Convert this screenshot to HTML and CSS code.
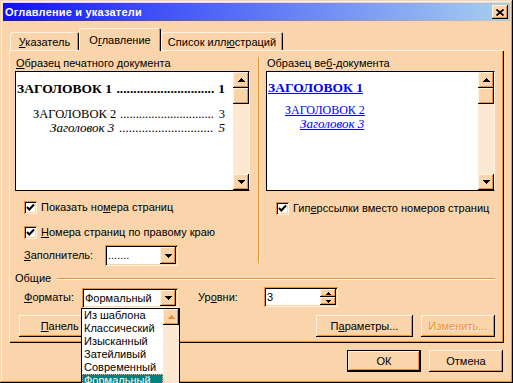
FILE: index.html
```html
<!DOCTYPE html>
<html lang="ru">
<head>
<meta charset="utf-8">
<title>Оглавление и указатели</title>
<link rel="stylesheet" href="styles.css">
</head>
<body>
<div class="window">
  <div class="titlebar">
    <span class="title">Оглавление и указатели</span>
    <span class="close"><svg width="8" height="7" viewBox="0 0 8 7"><path d="M0.5 0.5L7.5 6.5M7.5 0.5L0.5 6.5" stroke="#000" stroke-width="1.7"/></svg></span>
  </div>
  <div class="body">
    <div class="tabs">
      <div class="tab t1"><u>У</u>казатель</div>
      <div class="tab t2 active">О<u>г</u>лавление</div>
      <div class="tab t3">Список илл<u>ю</u>страций</div>
    </div>
    <div class="panel">
      <div class="columns">
        <div class="col col-left">
          <div class="label"><u>О</u>бразец печатного документа</div>
          <div class="preview preview-left">
            <div class="page print">
              <div class="toc h1"><span class="t">ЗАГОЛОВОК 1</span><span class="dots">.............................</span><span class="n">1</span></div>
              <div class="toc h2"><span class="t">ЗАГОЛОВОК 2</span><span class="dots">..............................</span><span class="n">3</span></div>
              <div class="toc h3"><span class="t">Заголовок 3</span><span class="dots">.............................</span><span class="n">5</span></div>
            </div>
            <div class="vscroll">
              <span class="sbtn"><svg width="7" height="4" viewBox="0 0 7 4"><path d="M3 0h1v1h1v1h1v1h1v1h-7v-1h1v-1h1v-1h1z"/></svg></span>
              <span class="thumb"></span>
              <span class="track"></span>
              <span class="sbtn"><svg width="7" height="4" viewBox="0 0 7 4"><path d="M0 0h7v1h-1v1h-1v1h-1v1h-1v-1h-1v-1h-1v-1h-1z"/></svg></span>
            </div>
          </div>
          <div class="check-row first">
            <span class="checkbox"><svg width="9" height="9" viewBox="0 0 9 9"><path d="M1 4l2.3 2.5L8 1.5" fill="none" stroke="#000" stroke-width="2"/></svg></span>
            <span>Показать но<u>м</u>ера страниц</span>
          </div>
          <div class="check-row second">
            <span class="checkbox"><svg width="9" height="9" viewBox="0 0 9 9"><path d="M1 4l2.3 2.5L8 1.5" fill="none" stroke="#000" stroke-width="2"/></svg></span>
            <span><u>Н</u>омера страниц по правому краю</span>
          </div>
          <div class="fill-row">
            <span class="fill-label"><u>З</u>аполнитель:</span>
            <div class="combo combo-fill">
              <span class="val">.......</span>
              <span class="ddbtn"><svg width="7" height="4" viewBox="0 0 7 4"><path d="M0 0h7v1h-1v1h-1v1h-1v1h-1v-1h-1v-1h-1v-1h-1z"/></svg></span>
            </div>
          </div>
        </div>
        <div class="col col-right">
          <div class="label">Образец ве<u>б</u>-документа</div>
          <div class="preview preview-right">
            <div class="page web">
              <div class="w1"><a>ЗАГОЛОВОК 1</a></div>
              <div class="w2"><a>ЗАГОЛОВОК 2</a></div>
              <div class="w3"><a>Заголовок 3</a></div>
            </div>
            <div class="vscroll">
              <span class="sbtn"><svg width="7" height="4" viewBox="0 0 7 4"><path d="M3 0h1v1h1v1h1v1h1v1h-7v-1h1v-1h1v-1h1z"/></svg></span>
              <span class="thumb"></span>
              <span class="track"></span>
              <span class="sbtn"><svg width="7" height="4" viewBox="0 0 7 4"><path d="M0 0h7v1h-1v1h-1v1h-1v1h-1v-1h-1v-1h-1v-1h-1z"/></svg></span>
            </div>
          </div>
          <div class="check-row web-check">
            <span class="checkbox"><svg width="9" height="9" viewBox="0 0 9 9"><path d="M1 4l2.3 2.5L8 1.5" fill="none" stroke="#000" stroke-width="2"/></svg></span>
            <span>Гип<u>е</u>рссылки вместо номеров страниц</span>
          </div>
        </div>
      </div>
      <div class="group-head">
        <span>Общие</span>
        <span class="etch"></span>
      </div>
      <div class="formats-row">
        <span class="fmt-label"><u>Ф</u>орматы:</span>
        <div class="combo combo-fmt">
          <span class="val">Формальный</span>
          <span class="ddbtn"><svg width="7" height="4" viewBox="0 0 7 4"><path d="M0 0h7v1h-1v1h-1v1h-1v1h-1v-1h-1v-1h-1v-1h-1z"/></svg></span>
          <div class="dropdown">
            <div class="items">
              <div class="item">Из шаблона</div>
              <div class="item">Классический</div>
              <div class="item">Изысканный</div>
              <div class="item">Затейливый</div>
              <div class="item">Современный</div>
              <div class="item selected">Формальный</div>
            </div>
            <div class="vscroll list-scroll">
              <span class="sbtn disabled"><svg width="7" height="4" viewBox="0 0 7 4"><path d="M3 0h1v1h1v1h1v1h1v1h-7v-1h1v-1h1v-1h1z"/></svg></span>
              <span class="track"></span>
            </div>
          </div>
        </div>
        <span class="lvl-label">Ур<u>о</u>вни:</span>
        <div class="spin">
          <span class="val">3</span>
          <span class="spin-btns">
            <span class="spbtn"><svg width="5" height="3" viewBox="0 0 5 3"><path d="M2 0h1v1h1v1h1v1h-5v-1h1v-1h1z"/></svg></span>
            <span class="spbtn"><svg width="5" height="3" viewBox="0 0 5 3"><path d="M0 0h5v1h-1v1h-1v1h-1v-1h-1v-1h-1z"/></svg></span>
          </span>
        </div>
      </div>
      <div class="buttons-row">
        <span class="btn btn-panel"><u>П</u>анель структуры</span>
        <span class="btn btn-params">П<u>а</u>раметры...</span>
        <span class="btn btn-edit disabled">Изменить...</span>
      </div>
    </div>
    <div class="dialog-buttons">
      <span class="btn default">ОК</span>
      <span class="btn">Отмена</span>
    </div>
  </div>
</div>
</body>
</html>
```

FILE: styles.css
```css
* { box-sizing: border-box; }

body {
  margin: 0;
  font: 11px/13px "Liberation Sans", Arial, sans-serif;
  color: #000;
  background: #FAD4AA;
}

u { text-decoration: underline; }

.window {
  width: 513px;
  height: 383px;
  padding: 3px;
  background: #FAD4AA;
  position: relative;
  overflow: hidden;
  box-shadow: inset -1px -1px #000, inset 1px 1px #FAD4AA, inset -2px -2px #F0902C, inset 2px 2px #FFF3E4;
}

.titlebar {
  height: 18px;
  display: flex;
  align-items: center;
  justify-content: space-between;
  padding: 0 2px 0 2px;
  background: linear-gradient(to right, #1010F8 0%, #4050F8 30%, #A8D0F0 100%);
}

.title {
  color: #fff;
  font-weight: bold;
  font-size: 11px;
  letter-spacing: 0.2px;
}

.close {
  width: 16px;
  height: 14px;
  display: flex;
  align-items: center;
  justify-content: center;
  background: #FAD4AA;
  box-shadow: inset -1px -1px #000, inset 1px 1px #FFF3E4, inset -2px -2px #F0902C;
}

.body {
  padding: 7px 6px 0 6px;
}

.tabs {
  height: 22px;
  display: flex;
  align-items: flex-start;
  padding-left: 1px;
}

.tab {
  margin-top: 4px;
  height: 18px;
  padding-top: 4px;
  text-align: center;
  background: #FAD4AA;
  border-radius: 2px 2px 0 0;
  box-shadow: inset 1px 1px #FFF3E4, inset -1px 0 #000, inset -2px 0 #F0902C;
}

.tab.t1 { width: 69px; }
.tab.t2 { width: 82px; }
.tab.t3 { width: 122px; }

.tab.active {
  margin-top: 0;
  height: 23px;
  padding-top: 6px;
  position: relative;
  z-index: 2;
}

.panel {
  height: 293px;
  padding: 1px;
  background: #FAD4AA;
  box-shadow: inset 1px 1px #FFF3E4, inset -1px -1px #000, inset -2px -2px #F0902C;
}

.columns {
  height: 218px;
  display: flex;
  align-items: flex-start;
}

.col-left {
  width: 248px;
  padding: 6px 0 0 5px;
}

.col-right {
  margin-top: 6px;
  height: 206px;
  flex: 1;
  padding-left: 8px;
  box-shadow: inset 1px 0 #F0902C, inset 2px 0 #FFF3E4;
}

.label {
  padding-left: 1px;
  height: 13px;
  margin-bottom: 1px;
}

.preview {
  height: 120px;
  display: flex;
  border: 1px solid #000;
  border-right-color: #FFF3E4;
}

.preview-left { width: 235px; }
.preview-right { width: 229px; }

.page {
  flex: 1;
  background: #fff;
  font-family: "Liberation Serif", "Times New Roman", serif;
  padding: 8px 8px 0 1px;
  overflow: hidden;
}

.page.web { padding-top: 7px; }

.toc {
  display: flex;
  white-space: nowrap;
}

.toc .dots {
  margin-left: auto;
  padding-right: 4px;
}

.toc.h1 {
  font-size: 13.5px;
  line-height: 18px;
  font-weight: bold;
  margin-bottom: 9px;
}

.toc.h2 {
  font-size: 12.5px;
  line-height: 14px;
  padding-left: 16px;
}

.toc.h2 .dots { padding-right: 5px; }

.toc.h3 {
  font-size: 13px;
  line-height: 14px;
  font-style: italic;
  padding-left: 33px;
}

.toc.h3 .dots { padding-right: 5px; }

.web a {
  color: #0000FF;
  text-decoration: underline;
}

.web .w1 {
  font-size: 13.5px;
  line-height: 18px;
  font-weight: bold;
  margin-bottom: 6px;
}

.web .w2 {
  font-size: 12px;
  line-height: 14px;
  padding-left: 17px;
}

.web .w3 {
  font-size: 13px;
  line-height: 14px;
  font-style: italic;
  padding-left: 32px;
}

.vscroll {
  width: 16px;
  display: flex;
  flex-direction: column;
  background: #FDE8D2;
}

.sbtn, .thumb {
  width: 16px;
  height: 16px;
  flex: none;
  display: flex;
  align-items: center;
  justify-content: center;
  background: #FAD4AA;
  box-shadow: inset -1px -1px #000, inset 1px 1px #FFF3E4, inset -2px -2px #F0902C;
}

.sbtn svg { fill: #000; }
.sbtn.disabled svg { fill: #F0902C; }

.track { flex: 1; }

.check-row {
  display: flex;
  align-items: center;
  height: 13px;
  gap: 4px;
}

.check-row.first { margin-top: 10px; padding-left: 9px; }
.check-row.second { margin-top: 12px; padding-left: 9px; }
.check-row.web-check { margin-top: 11px; padding-left: 10px; }

.checkbox {
  width: 13px;
  height: 13px;
  flex: none;
  display: flex;
  align-items: center;
  justify-content: center;
  background: #fff;
  box-shadow: inset 1px 1px #F0902C, inset -1px -1px #FFF3E4, inset 2px 2px #000, inset -2px -2px #FAD4AA;
}

.fill-row {
  margin-top: 6px;
  padding-left: 9px;
  display: flex;
  align-items: center;
  height: 21px;
}

.fill-label { width: 81px; }

.combo {
  position: relative;
  display: flex;
  align-items: center;
  background: #fff;
  box-shadow: inset 1px 1px #F0902C, inset -1px -1px #FFF3E4, inset 2px 2px #000, inset -2px -2px #FAD4AA;
}

.combo .val {
  flex: 1;
  padding-left: 3px;
}

.combo-fill { width: 73px; height: 21px; }

.ddbtn {
  width: 16px;
  height: calc(100% - 4px);
  margin-right: 2px;
  display: flex;
  align-items: center;
  justify-content: center;
  background: #FAD4AA;
  box-shadow: inset -1px -1px #000, inset 1px 1px #FFF3E4, inset -2px -2px #F0902C;
}

.ddbtn svg { fill: #000; }

.group-head {
  margin-top: 3px;
  height: 13px;
  display: flex;
  align-items: center;
  padding: 0 8px 0 5px;
}

.etch {
  flex: 1;
  height: 2px;
  margin-left: 6px;
  border-top: 1px solid #F0902C;
  border-bottom: 1px solid #FFF3E4;
}

.formats-row {
  margin-top: 2px;
  height: 21px;
  display: flex;
  align-items: flex-start;
  padding-left: 14px;
}

.fmt-label { width: 58px; line-height: 20px; }

.combo-fmt {
  width: 96px;
  height: 20px;
  margin-top: 1px;
  z-index: 5;
}

.lvl-label {
  margin-left: 20px;
  width: 66px;
  line-height: 20px;
}

.spin {
  width: 74px;
  height: 20px;
  display: flex;
  align-items: center;
  background: #fff;
  box-shadow: inset 1px 1px #F0902C, inset -1px -1px #FFF3E4, inset 2px 2px #000, inset -2px -2px #FAD4AA;
}

.spin .val { flex: 1; padding-left: 3px; }

.spin-btns {
  width: 16px;
  height: 16px;
  margin-right: 2px;
  display: flex;
  flex-direction: column;
}

.spbtn {
  height: 8px;
  display: flex;
  align-items: center;
  justify-content: center;
  background: #FAD4AA;
  box-shadow: inset -1px -1px #000, inset 1px 1px #FFF3E4, inset -2px -2px #F0902C;
}

.spbtn svg { fill: #000; }

.dropdown {
  position: absolute;
  top: 100%;
  left: -1px;
  width: 99px;
  height: 100px;
  display: flex;
  border: 1px solid #000;
  background: #fff;
}

.dropdown .items { flex: 1; }

.item {
  height: 13px;
  padding-left: 2px;
  white-space: nowrap;
}

.item.selected {
  background: #008080;
  color: #fff;
  outline: 1px dotted #F0A080;
  outline-offset: -1px;
}

.buttons-row {
  margin-top: 7px;
  display: flex;
  padding: 0 8px 0 9px;
}

.btn {
  height: 22px;
  display: flex;
  align-items: center;
  justify-content: center;
  background: #FAD4AA;
  box-shadow: inset -1px -1px #000, inset 1px 1px #FFF3E4, inset -2px -2px #F0902C;
}

.btn-panel { width: 136px; }
.btn-params { width: 97px; margin-left: auto; }
.btn-edit { width: 74px; margin-left: 8px; }

.btn.disabled {
  color: #F0902C;
  text-shadow: 1px 1px #FFF3E4;
}

.dialog-buttons {
  margin-top: 7px;
  display: flex;
  justify-content: flex-end;
  gap: 8px;
  padding-right: 1px;
}

.dialog-buttons .btn { width: 74px; }

.dialog-buttons .btn.default {
  box-shadow: inset 0 0 0 1px #000, inset -2px -2px #000, inset 2px 2px #FFF3E4, inset -3px -3px #F0902C;
}
```
